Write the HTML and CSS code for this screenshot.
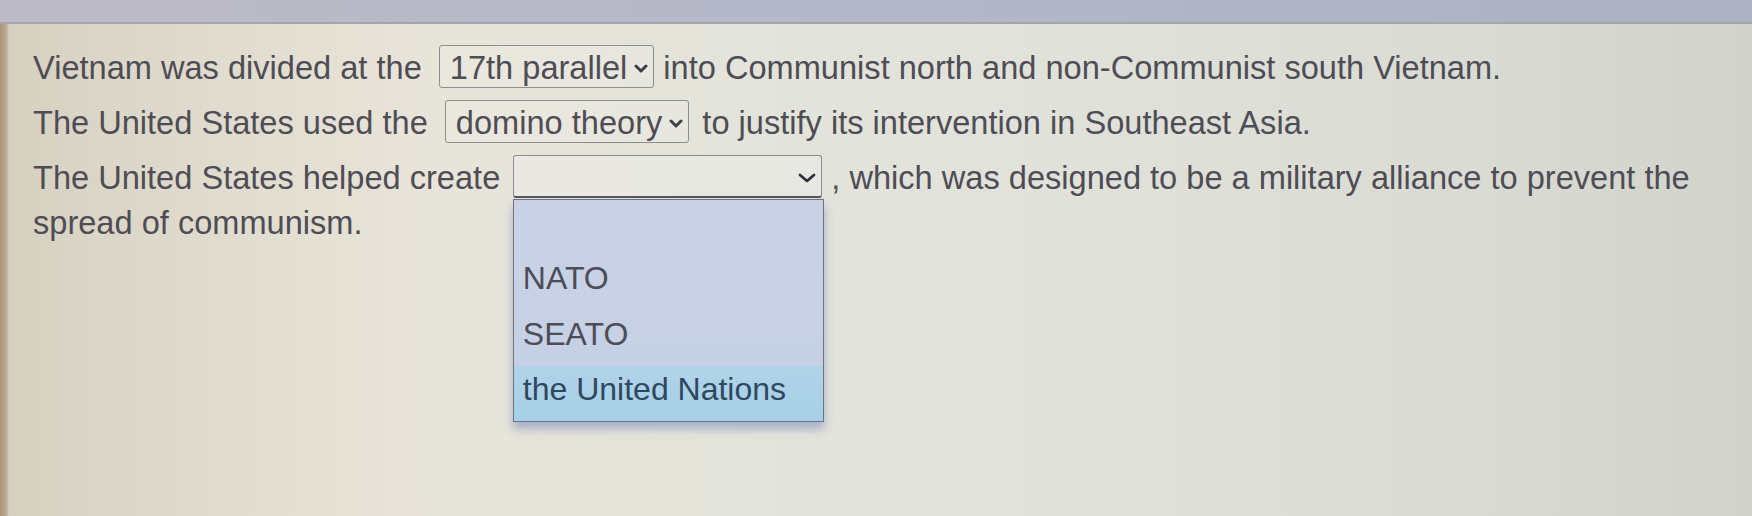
FILE: index.html
```html
<!DOCTYPE html>
<html lang="en">
<head>
<meta charset="utf-8">
<title>Cold War in Southeast Asia</title>
<link rel="stylesheet" href="styles.css">
</head>
<body>
<div class="screen">
  <div class="topbar"></div>
  <div class="content">
    <p class="line">Vietnam was divided at the <span class="sel"><span class="sel-text">17th parallel</span><svg class="chev" viewBox="0 0 14 9"><polyline points="2,2 7,7 12,2"/></svg></span> into Communist north and non-Communist south Vietnam.</p>
    <p class="line">The United States used the <span class="sel sel-gap"><span class="sel-text">domino theory</span><svg class="chev" viewBox="0 0 14 9"><polyline points="2,2 7,7 12,2"/></svg></span> to justify its intervention in Southeast Asia.</p>
    <p class="line">The United States helped create <span class="sel sel-open"><span class="sel-text sel-empty">&nbsp;</span><svg class="chev chev-big" viewBox="0 0 20 12"><polyline points="3,3 10,9 17,3"/></svg><span class="menu"><span class="opt"></span><span class="opt">NATO</span><span class="opt">SEATO</span><span class="opt opt-hl">the United Nations</span></span></span> , which was designed to be a military alliance to prevent the spread of communism.</p>
  </div>
</div>
</body>
</html>
```
FILE: styles.css
```css
html, body {
  margin: 0;
  padding: 0;
}
body {
  width: 1752px;
  height: 516px;
  overflow: hidden;
  font-family: "Liberation Sans", Arial, sans-serif;
}
.screen {
  height: 516px;
  display: flex;
  flex-direction: column;
  background: linear-gradient(90deg, #a8967a 0px, #b9aa8f 6px, #d6cfbf 9px, #dad5c6 80px, #e3dfd2 300px, #e8e4d9 420px, #e4e4db 700px, #e0e1d9 1100px, #d9dbd2 1500px, #d1d3ca 1752px);
}
.topbar {
  height: 22px;
  flex: none;
  background: linear-gradient(90deg, #bdbac6 0%, #b5b8c8 40%, #abb2c4 100%);
  border-bottom: 2px solid #a2a4ae;
}
.content {
  padding: 21px 0 0 33px;
  color: #4e4d55;
  font-size: 32.6px;
  line-height: 45px;
}
.line {
  margin: 0 0 10px 0;
}
.sel {
  position: relative;
  display: inline-flex;
  align-items: baseline;
  box-sizing: border-box;
  height: 43px;
  margin-left: 8px;
  padding: 4px 5px 1px 10px;
  line-height: 36px;
  border: 1.5px solid #8d8c8f;
  border-radius: 3px;
  background: rgba(255, 255, 255, 0.12);
  vertical-align: baseline;
}
.sel-gap {
  margin-right: 4px;
}
.sel-text {
  color: #4e4d55;
}
.sel-empty {
  flex: 1;
}
.chev {
  width: 14px;
  height: 9px;
  margin-left: 7px;
  align-self: center;
  fill: none;
  stroke: #3f3e46;
  stroke-width: 3;
  stroke-linecap: round;
  stroke-linejoin: round;
}
.sel-open {
  width: 309px;
  margin-left: 4px;
  padding-right: 4px;
  border-bottom: 2px solid #55565c;
  background: rgba(240, 242, 244, 0.35);
}
.chev-big {
  width: 20px;
  height: 12px;
  stroke: #2f2f36;
  stroke-width: 2.8;
}
.menu {
  position: absolute;
  left: -1.5px;
  top: 43px;
  width: 311px;
  box-sizing: border-box;
  display: flex;
  flex-direction: column;
  border: 1.5px solid #6e7484;
  background: linear-gradient(180deg, #c9d2e5 0%, #c7d1e5 60%, #c3cfe4 100%);
  box-shadow: 0 7px 9px rgba(90, 110, 175, 0.45);
}
.opt {
  display: block;
  height: 55.3px;
  box-sizing: border-box;
  padding: 0 0 0 9px;
  line-height: 47px;
  font-size: 32px;
  color: #4c4d57;
  white-space: nowrap;
}
.opt-hl {
  background: linear-gradient(180deg, #b0d3e8 0%, #a7d0e6 100%);
  color: #2e4860;
}
```
